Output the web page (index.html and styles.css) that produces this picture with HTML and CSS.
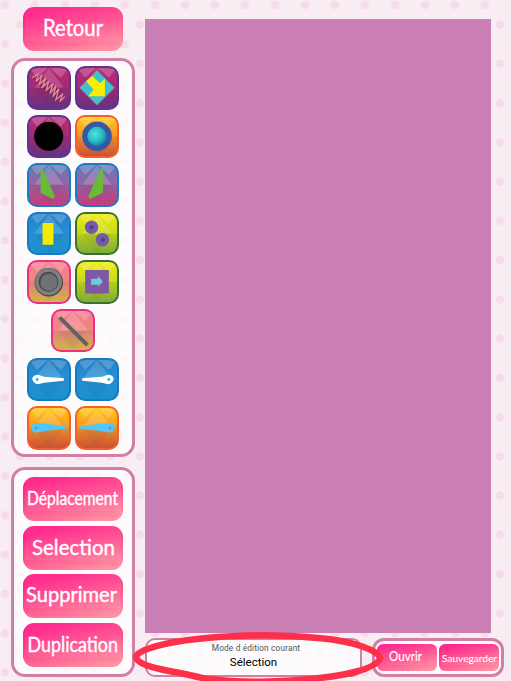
FILE: index.html
```html
<!DOCTYPE html>
<html lang="fr">
<head>
<meta charset="utf-8">
<title>Éditeur</title>
<link rel="stylesheet" href="styles.css">
</head>
<body>
<svg class="defs" width="0" height="0" aria-hidden="true">
  <symbol id="facets" viewBox="0 0 44 44">
    <path d="M3 3 22 1 10 12Z M41 3 22 1 34 12Z" fill="#fff" opacity=".2"/>
    <path d="M22 2 37 22H7Z" fill="#fff" opacity=".16"/>
    <path d="M1 43V22H7L22 42Z M43 43V22H37L22 42Z" fill="#203050" opacity=".08"/>
    <path d="M7 22H37L22 42Z" fill="#203050" opacity=".13"/>
  </symbol>
  <symbol id="paddle" viewBox="0 0 44 44">
    <path d="M5 21Q6 17 11 17L17 19 37 20.5V23L17 25 11 26.5Q6 26 5 21Z"/>
  </symbol>
</svg>
<div class="app">
  <aside class="side">
    <button class="btn"><svg viewBox="0 0 100 44"><text x="20" y="29" font-size="22.5" textLength="60" lengthAdjust="spacingAndGlyphs">Retour</text></svg></button>
    <section class="panel palette">
      <div class="tile plum"><svg viewBox="0 0 44 44"><use href="#facets"/><path d="M6 14 11 9 9 18 16 11 13 21 20 14 16 24 23 17 20 27 27 20 24 30 30 22 27 33 33 25 30 36 37 30 34 37" class="spring-shadow"/><path d="M5 12 11 8 9 16 15 9 12 19 19 12 15 22 22 15 19 25 26 18 23 28 29 20 26 31 32 23 29 34 36 28 33 36 38 31" class="spring"/></svg></div>
      <div class="tile plum"><svg viewBox="0 0 44 44"><use href="#facets"/><path d="M22 4 40 22 22 40 4 22Z" fill="#40c1cf" stroke="#c62d65" stroke-width=".7"/><path d="M11 15.5 17 10 25 17.5 30 13V30.5H13L18.5 24Z" fill="#f8ee00"/></svg></div>
      <div class="tile plum"><svg viewBox="0 0 44 44"><use href="#facets"/><circle cx="21.7" cy="21.5" r="14.7"/></svg></div>
      <div class="tile orange"><svg viewBox="0 0 44 44"><defs><radialGradient id="ball" cx=".4" cy=".4" r=".62"><stop stop-color="#4de6df"/><stop offset=".6" stop-color="#26bdc7"/><stop offset="1" stop-color="#1a8497"/></radialGradient></defs><use href="#facets"/><circle cx="22" cy="21.5" r="15" fill="#3559a8"/><circle cx="22" cy="21.5" r="9.8" fill="url(#ball)"/></svg></div>
      <div class="tile dusk"><svg viewBox="0 0 44 44"><use href="#facets"/><path d="M13.5 5H15L28 34 26 36.5 13.5 30Z" fill="#69bb35"/></svg></div>
      <div class="tile dusk"><svg viewBox="0 0 44 44"><use href="#facets"/><path d="M28 5H26.5L13 34 15 36.5 28 30Z" fill="#69bb35"/></svg></div>
      <div class="tile blue"><svg viewBox="0 0 44 44"><use href="#facets"/><path d="M15.5 11H26.5V33H15.5Z" fill="#f5ea00"/></svg></div>
      <div class="tile lime"><svg viewBox="0 0 44 44"><use href="#facets"/><g fill="#7859a8"><circle cx="16.5" cy="15.5" r="6.8"/><circle cx="27.5" cy="28" r="6.8"/></g><g fill="#493f9b"><circle cx="16.5" cy="15.5" r="2"/><circle cx="28" cy="28" r="2"/></g></svg></div>
      <div class="tile peach"><svg viewBox="0 0 44 44"><use href="#facets"/><circle cx="21.8" cy="22.5" r="14.4" fill="#454649"/><circle cx="21.5" cy="22" r="11.8" fill="none" stroke="#7d7f82" stroke-width="3.6"/><circle cx="22" cy="22.5" r="9" fill="#707174" stroke="#4b4c4f" stroke-width=".8"/></svg></div>
      <div class="tile lime"><svg viewBox="0 0 44 44"><use href="#facets"/><path d="M10 10H34V34H10Z" fill="#8057a6"/><path d="M16 19H23V16L28 22 23 27V25H16Z" fill="#6accdd"/></svg></div>
      <div class="tile peach solo"><svg viewBox="0 0 44 44"><use href="#facets"/><path d="M8.5 8.5 36.5 36.5" stroke="#626064" stroke-width="4"/></svg></div>
      <div class="tile blue"><svg viewBox="0 0 44 44"><use href="#facets"/><use href="#paddle" fill="#fff"/><circle cx="10" cy="21.7" r="1.5" fill="#25b9e7"/></svg></div>
      <div class="tile blue"><svg viewBox="0 0 44 44"><use href="#facets"/><g transform="translate(44) scale(-1 1)"><use href="#paddle" fill="#fff"/><circle cx="10" cy="21.7" r="1.5" fill="#25b9e7"/></g></svg></div>
      <div class="tile orange"><svg viewBox="0 0 44 44"><use href="#facets"/><path d="M4 22Q5 17 10 17L20 18 40 21V23L20 25 9 27Q4 26 4 22Z" fill="#4bcaf7"/><circle cx="9" cy="22.2" r="1.6" fill="#9b7bd0"/></svg></div>
      <div class="tile orange"><svg viewBox="0 0 44 44"><use href="#facets"/><g transform="translate(44) scale(-1 1)"><path d="M4 22Q5 17 10 17L20 18 40 21V23L20 25 9 27Q4 26 4 22Z" fill="#4bcaf7"/><circle cx="9" cy="22.2" r="1.6" fill="#9b7bd0"/></g></svg></div>
    </section>
    <section class="panel modes">
      <button class="btn"><svg viewBox="0 0 100 44"><text x="4" y="28" font-size="19" textLength="91" lengthAdjust="spacingAndGlyphs">Déplacement</text></svg></button>
      <button class="btn"><svg viewBox="0 0 100 44"><text x="9" y="28.5" font-size="22" textLength="83" lengthAdjust="spacingAndGlyphs">Selection</text></svg></button>
      <button class="btn"><svg viewBox="0 0 100 44"><text x="3" y="27.5" font-size="21" textLength="91" lengthAdjust="spacingAndGlyphs">Supprimer</text></svg></button>
      <button class="btn"><svg viewBox="0 0 100 44"><text x="4.5" y="28.5" font-size="21" textLength="90.5" lengthAdjust="spacingAndGlyphs">Duplication</text></svg></button>
    </section>
  </aside>
  <main class="main">
    <div class="board"></div>
    <footer class="footer">
      <div class="panel status">
        <span class="label">Mode d édition courant</span>
        <span class="value">Sélection</span>
      </div>
      <div class="panel files">
        <button class="btn small"><svg viewBox="0 0 60 27"><text x="12" y="16.5" font-size="12.5" textLength="33" lengthAdjust="spacingAndGlyphs">Ouvrir</text></svg></button>
        <button class="btn small"><svg viewBox="0 0 60 27"><text x="3" y="17.5" font-size="10" textLength="55" lengthAdjust="spacingAndGlyphs">Sauvegarder</text></svg></button>
      </div>
    </footer>
  </main>
  <svg class="marker" viewBox="0 0 260 54">
    <path d="M250 31C249 24 225 14 188 11C150 7 105 8 67 12C38 15 8 22 6 30C7 38 32 43 50 46C66 49 70 51 78 52C110 56 155 55 180 52C214 49 247 42 250 31Z" fill="none" stroke="#fc3049" stroke-width="6.5" stroke-linejoin="round"/>
  </svg>
</div>
</body>
</html>
```
FILE: styles.css
```css
* { box-sizing: border-box; }
body { margin: 0; overflow: hidden; }
.defs { position: absolute; }

.app {
  position: relative;
  display: flex;
  gap: 10px;
  width: 511px;
  height: 681px;
  padding: 7px 7px 4px 11px;
  background-color: #f9edf4;
  background-image:
    radial-gradient(circle, #f6dce8 3.7px, transparent 4.7px),
    radial-gradient(circle, #f6dce8 3.7px, transparent 4.7px);
  background-size: 30px 39.25px;
  background-position: -10px -14.6px, 5px 5px;
  font-family: Roboto, "Liberation Sans", sans-serif;
}

.side { display: flex; flex-direction: column; align-items: center; width: 124px; }
.panel {
  border: 3px solid #d27fa5;
  border-radius: 14px;
  background: rgba(255, 255, 255, .78);
}

.btn {
  display: block;
  flex: none;
  width: 100px;
  height: 44px;
  padding: 0;
  border: 0;
  border-radius: 11px;
  background:
    linear-gradient(#ffffff12, #ffffff12) 2px 0 / 96px 34px no-repeat,
    linear-gradient(168deg, #ff1b87 12%, #ff4c8c 50%, #ff91a3 92%);
}
.btn svg { display: block; width: 100%; height: 100%; overflow: visible; }
.btn text { fill: #fff; stroke: #fff; stroke-width: .4px; font-family: Lato, sans-serif; }
.btn.small text { stroke-width: .1px; }

.palette {
  display: grid;
  grid-template-columns: 44px 44px;
  grid-auto-rows: 43.5px;
  gap: 5.1px 4.6px;
  justify-content: center;
  width: 124px;
  height: 399px;
  margin-top: 7px;
  padding-top: 5px;
}
.tile { border: 2px solid; border-radius: 10px; overflow: hidden; }
.tile svg { display: block; width: 44px; height: 43.5px; margin: -2px; }
.solo { grid-column: 1 / 3; justify-self: center; width: 44px; }
.plum { border-color: #633394; background: linear-gradient(#b82d72, #a32a75 50%, #6d3385); }
.orange { border-color: #f5602a; background: linear-gradient(#ffc915, #f89427 50%, #dc5535); }
.dusk { border-color: #1c7cc2; background: linear-gradient(#5e79b8, #9c63a1 50%, #d63c80); }
.blue { border-color: #187ac0; background: linear-gradient(#297dc4, #2496da 60%, #1b9ad9); }
.lime { border-color: #3b7033; background: linear-gradient(#f0e90c, #c5da1b 50%, #87b735); }
.peach { border-color: #ee2f81; background: linear-gradient(#f47c91, #ef8782 50%, #dec045); }
.spring { fill: none; stroke: #ee839d; stroke-width: 1.3; }
.spring-shadow { fill: none; stroke: #68334f; stroke-width: 1.2; }

.modes {
  display: flex;
  flex-direction: column;
  align-items: center;
  gap: 4.7px;
  width: 124px;
  height: 210px;
  margin-top: 10px;
  padding-top: 7px;
}

.main { display: flex; flex-direction: column; width: 359px; padding-top: 12px; }
.board { width: 346px; height: 614px; background: #ca7fb5; }
.footer { display: flex; gap: 10px; margin-top: 5px; }
.status {
  display: flex;
  flex-direction: column;
  align-items: center;
  width: 217px;
  height: 39px;
  border-width: 2px;
  border-radius: 10px;
}
.label { margin: 3px 0 0 5px; font-size: 8.3px; line-height: 10px; letter-spacing: .15px; color: #555; }
.value { margin-top: 3px; font-size: 11.5px; line-height: 13px; color: #000; }
.files {
  display: flex;
  gap: 2px;
  width: 132px;
  height: 39px;
  padding: 3px 2px;
  border-radius: 12px;
}
.small { width: 60px; height: 27px; border-radius: 6px; background-size: 58px 21px, auto; }

.marker { position: absolute; left: 130px; top: 627px; width: 260px; height: 54px; }
```
